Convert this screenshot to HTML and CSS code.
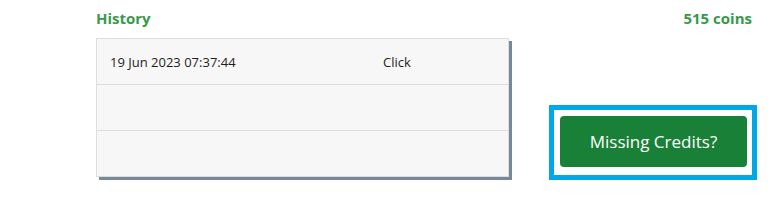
FILE: index.html
```html
<!DOCTYPE html>
<html>
<head>
<meta charset="utf-8">
<link rel="stylesheet" href="styles.css">
</head>
<body>
<div class="page">
  <section class="history">
    <h2 class="title">History</h2>
    <div class="table">
      <div class="row"><span class="date">19 Jun 2023 07:37:44</span><span class="action">Click</span></div>
      <div class="row"></div>
      <div class="row"></div>
    </div>
  </section>
  <aside class="side">
    <div class="coins">515 coins</div>
    <div class="highlight">
      <button class="btn">Missing Credits?</button>
    </div>
  </aside>
</div>
</body>
</html>
```
FILE: styles.css
```css
html, body { margin: 0; padding: 0; background: #fff; }
body { font-family: "Open Sans", "Noto Sans", sans-serif; color: #222; }
.page { display: flex; padding-top: 9px; }
.history { width: 413px; margin-left: 96px; }
.title { margin: 0; height: 29px; font-size: 15px; font-weight: 700; color: #38994c; line-height: 18px; }
.table { border: 1px solid #ddd; background: #f7f7f7; box-shadow: 3px 3px 0 #778899; }
.row { height: 45px; border-top: 1px solid #ddd; display: grid; grid-template-columns: 273px auto; align-items: center; padding-left: 13px; font-size: 13px; color: #1e1e1e; }
.row:first-child { border-top: 0; }
.side { flex: 1; display: flex; flex-direction: column; align-items: flex-end; margin-right: 13px; }
.coins { font-size: 15px; font-weight: 700; color: #38994c; line-height: 18px; padding-right: 5px; height: 96px; }
.highlight { border: 5px solid #00a8e8; padding: 6px 5px 8px 6px; }
.btn { display: block; width: 187px; height: 51px; border: 0; border-radius: 4px; background: #198037; color: #fff; font-family: "Open Sans", "Noto Sans", sans-serif; font-size: 17px; padding: 0; }
```
